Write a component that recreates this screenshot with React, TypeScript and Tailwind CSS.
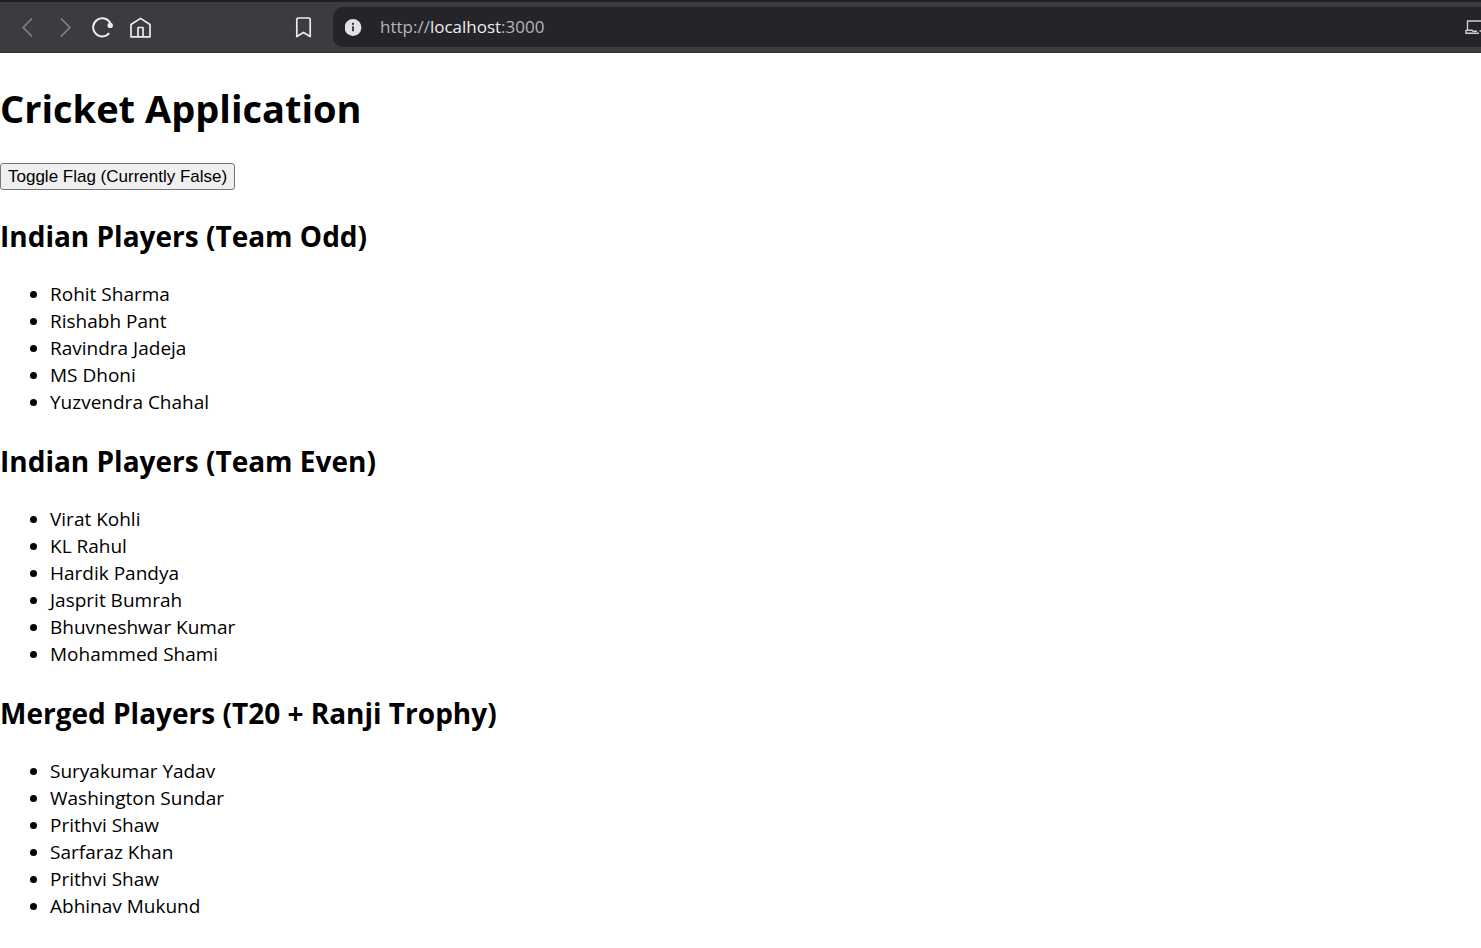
import { useState } from "react";

const ODD = ["Rohit Sharma", "Rishabh Pant", "Ravindra Jadeja", "MS Dhoni", "Yuzvendra Chahal"];
const EVEN = ["Virat Kohli", "KL Rahul", "Hardik Pandya", "Jasprit Bumrah", "Bhuvneshwar Kumar", "Mohammed Shami"];
const MERGED = ["Suryakumar Yadav", "Washington Sundar", "Prithvi Shaw", "Sarfaraz Khan", "Prithvi Shaw", "Abhinav Mukund"];

function BrowserBar() {
  return (
    <header className="flex h-[53px] items-center overflow-hidden border-t-2 border-b border-t-[#201f25] border-b-[#302e35] bg-[#3c3b40] pl-4 text-[#ececf0]">
      <nav aria-label="Browser" className="flex items-center gap-3.5">
        <button aria-label="Back" className="text-[#85848a]">
          <svg width="24" height="24" viewBox="0 0 24 24" fill="none" stroke="currentColor" strokeWidth="1.6">
            <path d="M16 3.5 7.2 12.5l8.8 9" />
          </svg>
        </button>
        <button aria-label="Forward" className="text-[#85848a]">
          <svg width="24" height="24" viewBox="0 0 24 24" fill="none" stroke="currentColor" strokeWidth="1.6">
            <path d="M7 3.5l8.8 9-8.8 9" />
          </svg>
        </button>
        <button aria-label="Reload">
          <svg width="24" height="24" viewBox="0 0 24 24" fill="none" stroke="currentColor" strokeWidth="2">
            <path d="M18.4 8.3A9.1 9.1 0 1 0 17.2 18.2" />
            <circle cx="18.2" cy="10.4" r="2.7" fill="currentColor" stroke="none" />
          </svg>
        </button>
        <button aria-label="Home">
          <svg width="24" height="24" viewBox="0 0 24 24" fill="none" stroke="currentColor" strokeWidth="1.7" strokeLinejoin="round">
            <path d="M1 9.5 10.5 3.4 20 9.5v12.3H1z" />
            <path d="M8 21.5v-9h5v9" />
          </svg>
        </button>
      </nav>
      <button aria-label="Bookmark" className="ml-[138px]">
        <svg width="24" height="24" viewBox="0 0 24 24" fill="none" stroke="currentColor" strokeWidth="1.7" strokeLinejoin="round">
          <path d="M6.3 3h10.4q1.5 0 1.5 1.5v17L11.5 17.4l-6.7 4.1v-17q0-1.5 1.5-1.5z" />
        </svg>
      </button>
      <div className="ml-[17px] flex h-10 flex-1 items-center rounded-l-[10px] bg-[#252429] pl-3">
        <svg width="17" height="18" viewBox="0 0 17 18" aria-hidden="true">
          <circle cx="8" cy="9.5" r="8.4" fill="#e2e1e8" />
          <path d="M8 8.3v5" stroke="#252429" strokeWidth="1.7" />
          <circle cx="8" cy="5.9" r="1.1" fill="#252429" />
        </svg>
        <span className="ml-[18px] text-[17px] text-[#b7b6bc]">
          http://<span className="text-[#ededf1]">localhost</span>:3000
        </span>
        <svg className="ml-auto" width="16" height="16" viewBox="0 0 16 16" fill="none" stroke="#cfced5" strokeWidth="1.4" aria-hidden="true">
          <path d="M2.5 11V2H16" />
          <path d="M1 11.3h6l1 1h4M14.5 12H16M1 11v3.3h13" />
        </svg>
      </div>
    </header>
  );
}

function PlayerSection({ title, players }: { title: string; players: string[] }) {
  return (
    <section>
      <h2 className="my-[25px] text-[28px] leading-10 font-bold">{title}</h2>
      <ul className="list-disc pl-[50px] text-[19px] leading-[27px]">
        {players.map((name, i) => (
          <li key={i}>{name}</li>
        ))}
      </ul>
    </section>
  );
}

export default function App() {
  const [flag, setFlag] = useState(false);
  return (
    <div className="bg-white font-['Open_Sans',sans-serif] text-black">
      <BrowserBar />
      <main className="pb-5">
        <h1 className="mt-7 mb-[27px] text-[38px] leading-[55px] font-bold">Cricket Application</h1>
        <button
          onClick={() => setFlag(!flag)}
          className="block rounded-[3px] border border-[#767676] bg-[#efefef] px-[7px] py-px font-['Liberation_Sans',sans-serif] text-[17px] leading-[23px]"
        >
          Toggle Flag (Currently {flag ? "True" : "False"})
        </button>
        <div className="pt-px">
          <PlayerSection title="Indian Players (Team Odd)" players={ODD} />
          <PlayerSection title="Indian Players (Team Even)" players={EVEN} />
          <PlayerSection title="Merged Players (T20 + Ranji Trophy)" players={MERGED} />
        </div>
      </main>
    </div>
  );
}
